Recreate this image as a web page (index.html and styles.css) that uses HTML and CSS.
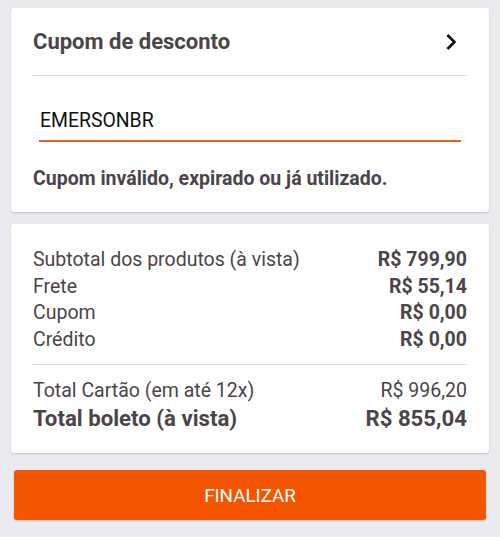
FILE: index.html
```html
<!DOCTYPE html>
<html lang="pt-BR">
<head>
    <meta charset="UTF-8">
    <meta name="viewport" content="width=device-width, initial-scale=1.0">
    <title>Carrinho</title>
    <link rel="stylesheet" href="styles.css">
</head>
<body>
    <div class="page">
        <div class="card coupon">
            <div class="coupon-head">
                <h2>Cupom de desconto</h2>
                <svg class="chevron" viewBox="0 0 24 24" width="32" height="32">
                    <path d="M10 6L8.59 7.41 13.17 12l-4.58 4.59L10 18l6-6z"/>
                </svg>
            </div>
            <div class="coupon-body">
                <input class="coupon-input" type="text" value="EMERSONBR">
                <p class="error">Cupom inválido, expirado ou já utilizado.</p>
            </div>
        </div>

        <div class="card summary">
            <div class="row"><span>Subtotal dos produtos (à vista)</span><b>R$ 799,90</b></div>
            <div class="row"><span>Frete</span><b>R$ 55,14</b></div>
            <div class="row"><span>Cupom</span><b>R$ 0,00</b></div>
            <div class="row"><span>Crédito</span><b>R$ 0,00</b></div>
            <hr class="divider">
            <div class="row"><span>Total Cartão (em até 12x)</span><span>R$ 996,20</span></div>
            <div class="row total"><span>Total boleto (à vista)</span><span>R$ 855,04</span></div>
        </div>

        <button class="finish">FINALIZAR</button>
    </div>
</body>
</html>
```

FILE: styles.css
```css
body {
    margin: 0;
    background: #e9ebef;
    font-family: Roboto, 'Noto Sans', sans-serif;
    color: #4b4549;
}
.page {
    padding: 8px 11px;
    display: flex;
    flex-direction: column;
}
.card {
    background: #fff;
    border-radius: 3px;
    box-shadow: 0 1px 2px rgba(0, 0, 0, 0.18);
}
.coupon {
    height: 204px;
    padding: 0 22px;
    box-sizing: border-box;
}
.coupon-head {
    height: 67px;
    display: flex;
    align-items: center;
    justify-content: space-between;
    border-bottom: 1px solid #dcdcdc;
}
.coupon-head h2 {
    margin: 0;
    font-size: 22px;
    font-weight: bold;
}
.chevron {
    fill: #111;
}
.coupon-body {
    padding: 0 6px;
}
.coupon-input {
    display: block;
    width: 100%;
    box-sizing: border-box;
    margin-top: 32px;
    padding: 0 1px 8px;
    border: none;
    border-bottom: 2px solid #e8611d;
    font-family: Roboto, sans-serif;
    font-size: 19.4px;
    line-height: 24px;
    height: 34px;
    color: #111;
    outline: none;
    background: transparent;
}
.error {
    margin: 25px -6px 0;
    font-size: 19.5px;
    line-height: 24px;
    font-weight: bold;
}
.summary {
    margin-top: 12px;
    padding: 23px 22px 21px;
}
.row {
    display: flex;
    justify-content: space-between;
    font-size: 19.5px;
    line-height: 26.7px;
}
.row b {
    font-weight: bold;
}
.divider {
    border: none;
    border-top: 1px solid #dcdcdc;
    margin: 10px 0 13px;
}
.total {
    font-size: 22.2px;
    line-height: 27px;
    font-weight: bold;
}
.finish {
    margin: 17px 3px 0;
    height: 50px;
    padding-top: 3px;
    border: none;
    border-radius: 3px;
    background: #f45600;
    color: #fff;
    font-family: Roboto, sans-serif;
    font-size: 18.8px;
    box-shadow: 0 1px 2px rgba(0, 0, 0, 0.2);
}
```
